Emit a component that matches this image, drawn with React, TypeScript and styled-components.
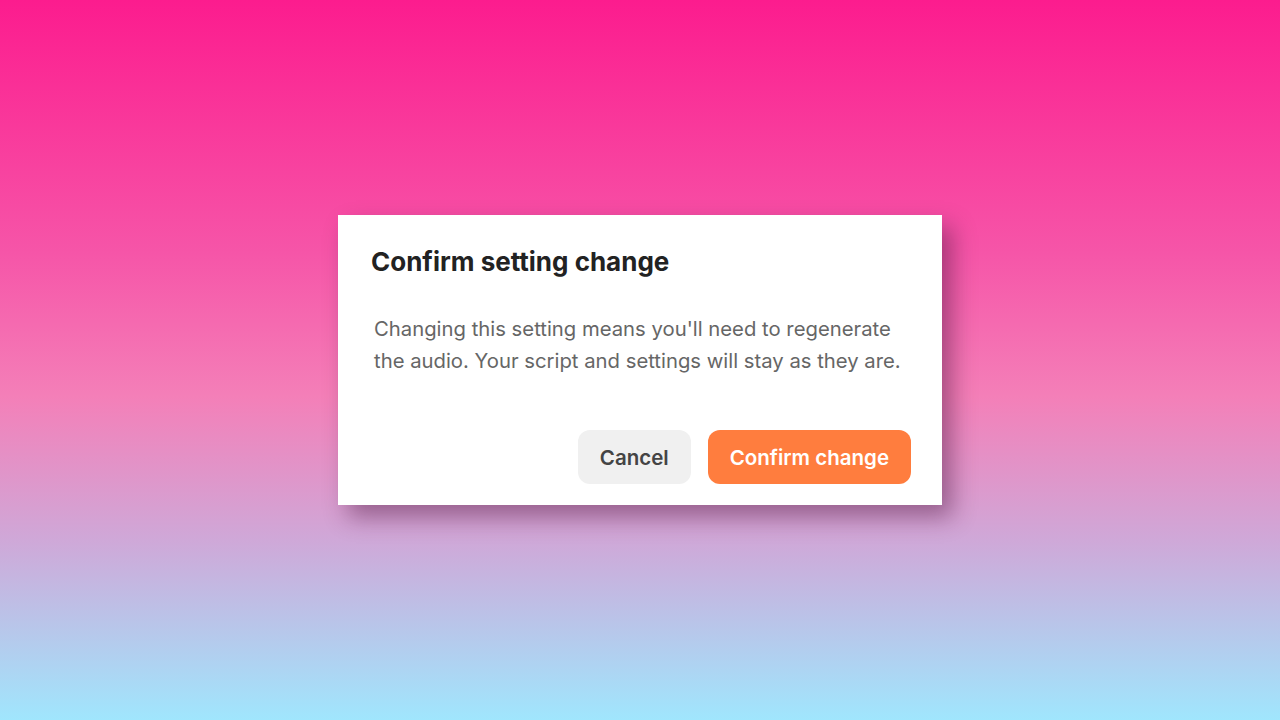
import React from 'react';
import styled, { createGlobalStyle } from 'styled-components';

const GlobalStyle = createGlobalStyle`
  html, body, #root {
    margin: 0;
    height: 100%;
  }
  body {
    font-family: Inter, "Noto Sans", sans-serif;
  }
`;

const Backdrop = styled.div`
  height: 100%;
  display: flex;
  align-items: center;
  justify-content: center;
  background: linear-gradient(
    180deg,
    #fc1c8e 0%,
    #f655a8 35%,
    #f47fb8 55%,
    #cfa8d8 75%,
    #a0e6fd 100%
  );
`;

const Dialog = styled.div`
  width: 604px;
  box-sizing: border-box;
  padding: 30px 31px 21px 33px;
  background: #ffffff;
  box-shadow: 10px 12px 22px rgba(70, 20, 60, 0.45);
  display: flex;
  flex-direction: column;
`;

const Title = styled.h2`
  margin: 0;
  font-size: 26px;
  font-weight: 700;
  line-height: 34px;
  color: #222222;
`;

const Body = styled.p`
  margin: 34px 0 0 3px;
  font-size: 20.3px;
  line-height: 32px;
  color: #666666;
`;

const Actions = styled.div`
  display: flex;
  justify-content: flex-end;
  gap: 17px;
  margin-top: 53px;
`;

const Button = styled.button<{ $primary?: boolean }>`
  height: 54px;
  padding: 0 22px;
  border: none;
  border-radius: 12px;
  font-family: inherit;
  font-size: 20.5px;
  font-weight: 600;
  cursor: pointer;
  background: ${p => (p.$primary ? '#ff7d3e' : '#f0f0f0')};
  color: ${p => (p.$primary ? '#ffffff' : '#444444')};
`;

export default function App() {
  return (
    <>
      <GlobalStyle />
      <Backdrop>
        <Dialog>
          <Title>Confirm setting change</Title>
          <Body>
            Changing this setting means you'll need to regenerate
            <br />
            the audio. Your script and settings will stay as they are.
          </Body>
          <Actions>
            <Button>Cancel</Button>
            <Button $primary>Confirm change</Button>
          </Actions>
        </Dialog>
      </Backdrop>
    </>
  );
}
